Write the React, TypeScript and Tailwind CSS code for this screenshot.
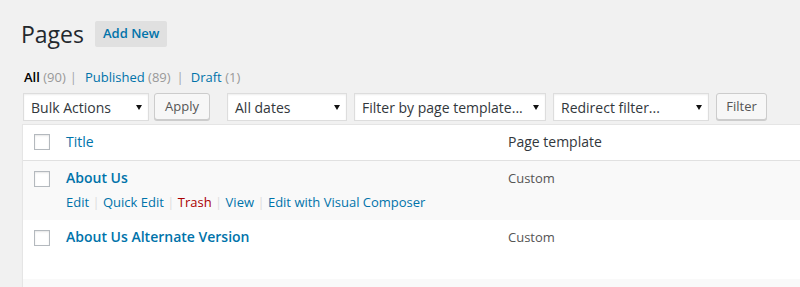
import React from "react";

function Arrow() {
  return (
    <svg width="6" height="5" viewBox="0 0 6 5" className="shrink-0">
      <polygon points="0,0 6,0 3,5" fill="#111" />
    </svg>
  );
}

function FakeSelect({ label, width }: { label: string; width: string }) {
  return (
    <div
      className={`${width} h-[28px] flex items-center justify-between border border-[#ddd] bg-white pl-[7px] pr-[6px] text-[14px] text-[#32373c] shadow-[inset_0_1px_2px_rgba(0,0,0,0.07)]`}
    >
      <span className="whitespace-nowrap">{label}</span>
      <Arrow />
    </div>
  );
}

function Btn({ label, width }: { label: string; width: string }) {
  return (
    <div
      className={`${width} h-[27px] flex items-center justify-center rounded-[3px] border border-[#ccc] bg-[#f7f7f7] text-[13px] text-[#555] shadow-[0_1px_0_#ccc]`}
    >
      {label}
    </div>
  );
}

function Checkbox({ top }: { top: string }) {
  return (
    <div
      className={`${top} w-4 h-4 border border-[#b4b9be] bg-white shadow-[inset_0_1px_2px_rgba(0,0,0,0.1)]`}
    />
  );
}

export default function App() {
  const rows = [
    { title: "About Us", template: "Custom", bg: "bg-[#f9f9f9]", actions: true },
    { title: "About Us Alternate Version", template: "Custom", bg: "bg-white", actions: false },
  ];

  return (
    <div className="w-full h-[287px] overflow-hidden bg-[#f1f1f1] font-['Open_Sans','Liberation_Sans',sans-serif]">
      <div className="pl-[22px] pt-[19px] w-[822px]">
        {/* Heading */}
        <div className="flex items-start -ml-[1px]">
          <h1 className="w-[74px] text-[23px] leading-[30px] font-normal text-[#23282d]">Pages</h1>
          <div className="mt-[2px] h-[26px] px-[8px] flex items-center rounded-[2px] bg-[#e0e0e0] text-[13px] font-semibold text-[#0073aa]">
            Add New
          </div>
        </div>

        {/* Status links */}
        <div className="mt-[18px] ml-[2px] text-[13px] leading-[20px] text-[#666] whitespace-nowrap">
          <span className="font-semibold text-black">All</span>{" "}
          <span className="text-[#999]">(90)</span>
          <span className="ml-[4px] mr-[8px] text-[#a0a5aa]">|</span>
          <span className="text-[#0073aa]">Published</span>{" "}
          <span className="text-[#999]">(89)</span>
          <span className="ml-[6px] mr-[7px] text-[#a0a5aa]">|</span>
          <span className="text-[#0073aa]">Draft</span>{" "}
          <span className="text-[#999]">(1)</span>
        </div>

        {/* Filters */}
        <div className="mt-[6px] ml-[1px] flex items-start">
          <FakeSelect label="Bulk Actions" width="w-[126px]" />
          <div className="ml-[5px]">
            <Btn label="Apply" width="w-[56px]" />
          </div>
          <div className="ml-[17px]">
            <FakeSelect label="All dates" width="w-[120px]" />
          </div>
          <div className="ml-[7px]">
            <FakeSelect label="Filter by page template..." width="w-[192px]" />
          </div>
          <div className="ml-[7px]">
            <FakeSelect label="Redirect filter..." width="w-[156px]" />
          </div>
          <div className="ml-[7px]">
            <Btn label="Filter" width="w-[51px]" />
          </div>
        </div>

        {/* Table */}
        <div className="mt-[3px] border border-[#e5e5e5] bg-white shadow-[0_1px_1px_rgba(0,0,0,0.04)]">
          <div className="flex h-[36px] border-b border-[#e1e1e1]">
            <div className="w-[33px] pl-[11px] shrink-0">
              <Checkbox top="mt-[9px]" />
            </div>
            <div className="w-[442px] shrink-0 pl-[10px] pt-[7px] text-[14px] leading-[20px] text-[#0073aa]">Title</div>
            <div className="flex-1 pl-[10px] pt-[7px] text-[14px] leading-[20px] text-[#32373c]">Page template</div>
          </div>

          {rows.map((r) => (
            <div key={r.title} className={`flex h-[59px] ${r.bg}`}>
              <div className="w-[33px] pl-[11px] shrink-0">
                <Checkbox top="mt-[10px]" />
              </div>
              <div className="w-[442px] shrink-0 pl-[10px] pt-[7px]">
                <div className="text-[14px] leading-[20px] font-semibold text-[#0073aa]">{r.title}</div>
                {r.actions && (
                  <div className="pt-[5px] text-[13px] leading-[19.5px] text-[#0073aa] whitespace-nowrap">
                    <span>Edit</span>
                    <span className="text-[#ddd]"> | </span>
                    <span>Quick Edit</span>
                    <span className="text-[#ddd]"> | </span>
                    <span className="text-[#a00]">Trash</span>
                    <span className="text-[#ddd]"> | </span>
                    <span>View</span>
                    <span className="text-[#ddd]"> | </span>
                    <span>Edit with Visual Composer</span>
                  </div>
                )}
              </div>
              <div className="flex-1 pl-[10px] pt-[7px] text-[13px] leading-[20px] text-[#555]">{r.template}</div>
            </div>
          ))}

          <div className="h-[59px] bg-[#f9f9f9]" />
        </div>
      </div>
    </div>
  );
}
